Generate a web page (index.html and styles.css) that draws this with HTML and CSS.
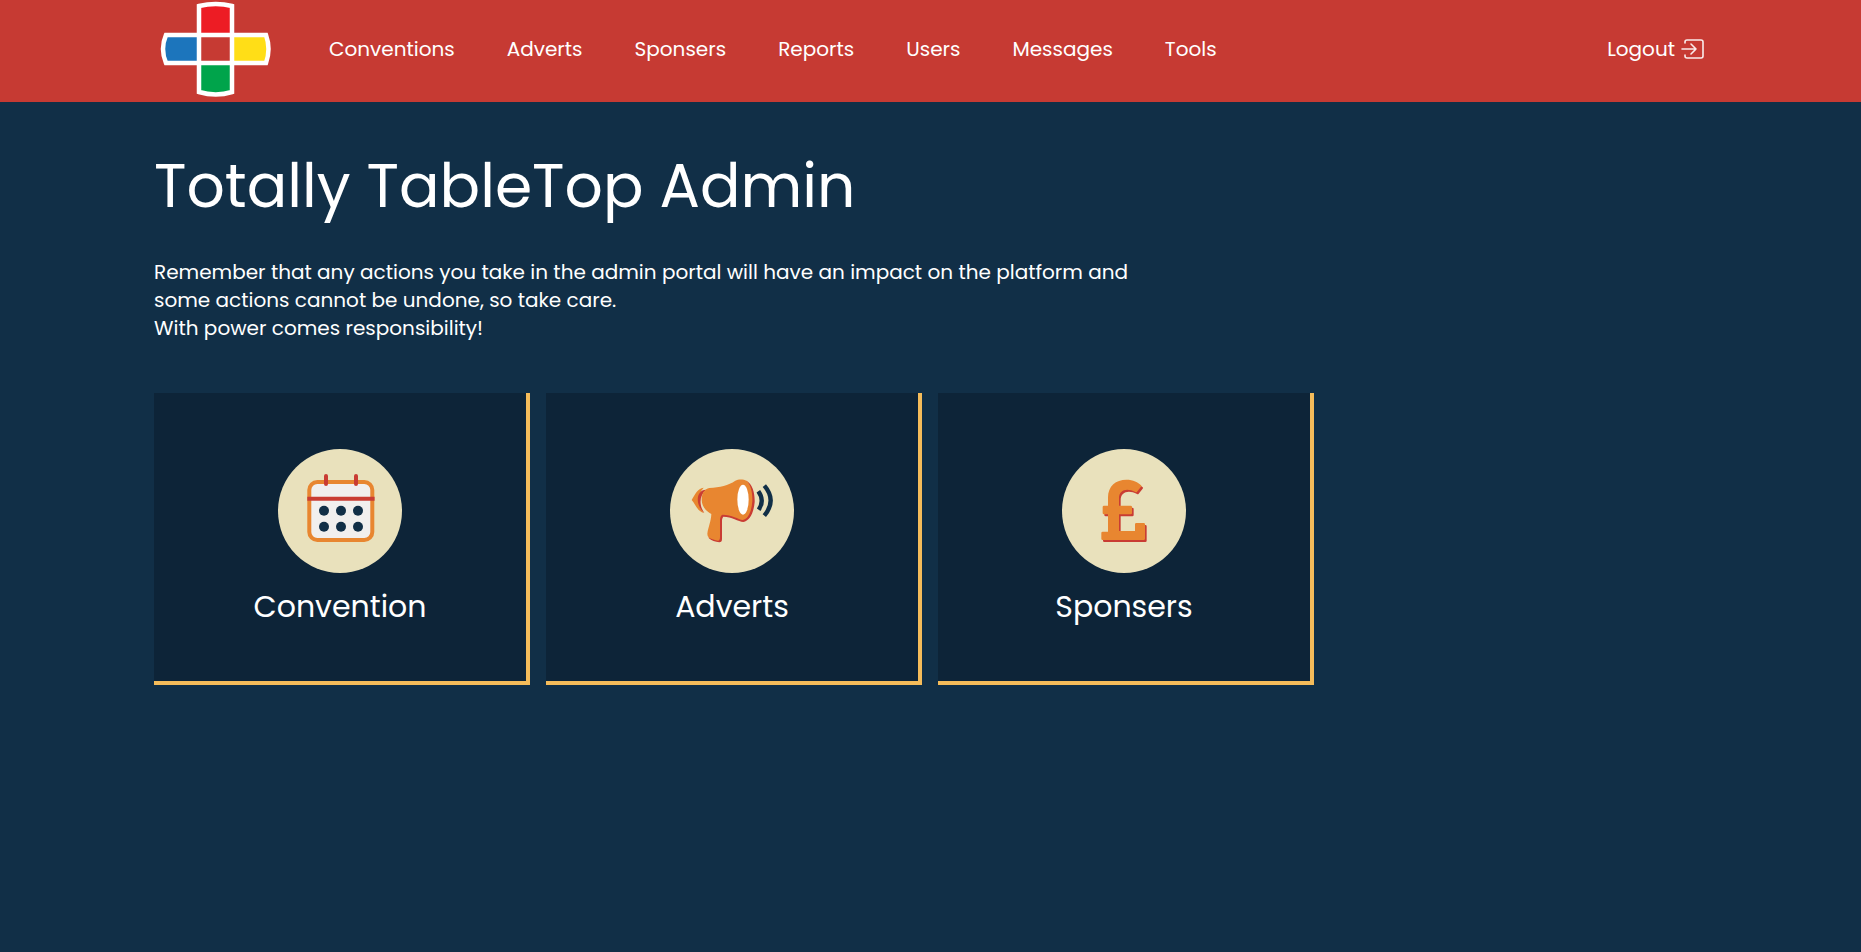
FILE: index.html
```html
<!DOCTYPE html>
<html lang="en">
<head>
<meta charset="utf-8">
<meta name="viewport" content="width=device-width, initial-scale=1">
<title>Totally TableTop Admin</title>
<link rel="stylesheet" href="styles.css">
</head>
<body>
<header class="site-header">
  <div class="container header-row">
    <a class="logo" href="#" aria-label="Home">
      <svg width="112" height="98" viewBox="160 0 112 98" aria-hidden="true">
        <path fill="#ed1c24" d="M199 34V7Q216 3 232 7V34Z"/>
        <path fill="#00a44b" d="M199 63V91Q216 96 232 91V63Z"/>
        <path fill="#1c75bc" d="M199 35H166Q161 49 166 63H199Z"/>
        <path fill="#ffde17" d="M232 35H266Q270 49 266 63H232Z"/>
        <g fill="none" stroke="#fff" stroke-width="4.500">
          <path d="M199 6Q216 2 232 6V92Q216 97 199 92Z"/>
          <path d="M166 35H266Q271 49 266 63H166Q160 49 166 35Z"/>
        </g>
      </svg>
    </a>
    <nav class="main-nav" aria-label="Main">
      <a href="#">Conventions</a>
      <a href="#">Adverts</a>
      <a href="#">Sponsers</a>
      <a href="#">Reports</a>
      <a href="#">Users</a>
      <a href="#">Messages</a>
      <a href="#">Tools</a>
    </nav>
    <a class="logout" href="#">Logout
      <svg width="24" height="20" viewBox="0 0 24 20" fill="none" stroke="#fff" stroke-opacity=".9" stroke-width="1.600" stroke-linecap="round" stroke-linejoin="round" aria-hidden="true">
        <path d="M4 4V3Q4 1 6 1H20Q22 1 22 3V17Q22 19 20 19H6Q4 19 4 17V16M1 10H15M10 5L15 10L10 15"/>
      </svg>
    </a>
  </div>
</header>
<main class="container content">
  <h1>Totally TableTop Admin</h1>
  <p class="intro">Remember that any actions you take in the admin portal will have an impact on the platform and some actions cannot be undone, so take care.<br>With power comes responsibility!</p>
  <div class="cards">
    <a class="card" href="#">
      <svg class="card-icon" viewBox="0 0 124 124" aria-hidden="true">
        <circle cx="62" cy="62" r="62" fill="#e9e1bc"/>
        <rect x="31.300" y="33" width="63" height="58" rx="8" fill="#f1efee" stroke="#e88630" stroke-width="4"/>
        <path d="M29.300 49.700H96.600" stroke="#c93c33" stroke-width="4"/>
        <path d="M48 27V35M78 27V35" stroke="#c93c33" stroke-width="4" stroke-linecap="round"/>
        <g fill="#112f47">
          <circle cx="46" cy="61.700" r="5"/><circle cx="63" cy="61.700" r="5"/><circle cx="80" cy="61.700" r="5"/>
          <circle cx="46" cy="77.700" r="5"/><circle cx="63" cy="77.700" r="5"/><circle cx="80" cy="77.700" r="5"/>
        </g>
      </svg>
      <h2>Convention</h2>
    </a>
    <a class="card" href="#">
      <svg class="card-icon" viewBox="30 27 372 372" aria-hidden="true">
        <circle cx="216" cy="213" r="186" fill="#e9e1bc"/>
        <path fill="#e88630" d="M95 180C106 162 112 146 131 143C115 160 108 195 132 219C112 214 108 195 95 180Z"/>
        <path fill="#c93c33" d="M138 149C108 149 104 196 133 219C117 196 117 168 138 149Z"/>
        <path fill="#c93c33" d="M259 122C278 132 285 160 284 187C281 220 268 243 250 246C235 245 215 230 190 230C186 234 186 240 186 248V297Q186 307 178 307C166 305 154 302 146 294L150 280L180 225Z"/>
        <path fill="#e88630" d="M125 178C125 160 134 147 148 144C180 142 205 136 226 122C236 116 252 118 259 122C273 132 278 160 277 183C275 213 265 238 248 240C235 238 215 224 188 224C181 226 180 235 180 245V290Q180 301 174 302C165 300 155 297 147 293Q142 290 142 281C145 260 153 245 154 222C137 212 125 200 125 178Z"/>
        <ellipse cx="249" cy="179" rx="17" ry="45" fill="#fff"/>
        <path fill="none" stroke="#112f47" stroke-width="13" d="M295 154Q315 182 296 209M313 137Q351 181 313 227"/>
      </svg>
      <h2>Adverts</h2>
    </a>
    <a class="card" href="#">
      <svg class="card-icon" viewBox="36 27 372 372" aria-hidden="true">
        <defs>
          <path id="pound" d="M174 197V172C174 138 198 119 229 119C250 119 264 127 273 136Q275 138 273 140L261 155Q259 158 256 156C230 143 207 150 207 175V197H242Q246 197 246 201V219Q246 223 242 223H207V273H255V253Q255 249 259 249H281Q285 249 285 253V296Q285 300 281 300H158Q154 300 154 296V279Q154 275 158 275H174V223H162Q158 223 158 219V201Q158 197 162 197Z"/>
        </defs>
        <circle cx="222" cy="213" r="186" fill="#e9e1bc"/>
        <use href="#pound" x="5" y="6" fill="#c93c33"/>
        <use href="#pound" fill="#e88630"/>
      </svg>
      <h2>Sponsers</h2>
    </a>
  </div>
</main>
</body>
</html>
```
FILE: styles.css
```css
* { box-sizing: border-box; }

body {
  margin: 0;
  min-height: 100vh;
  background: #112f47;
  color: #fff;
  font-family: Poppins, Inter, "Open Sans", sans-serif;
  font-size: 20px;
  line-height: 28px;
}

a { color: inherit; text-decoration: none; }

.container {
  width: 100%;
  max-width: 1601px;
  margin: 0 auto;
  padding: 0 24px;
}

.site-header { background: #c63a33; }

.header-row {
  display: flex;
  align-items: center;
  padding-bottom: 4px;
}

.logo { padding-left: 6px; }
.logo svg { display: block; }

.main-nav {
  display: flex;
  flex-wrap: wrap;
  gap: 52px;
  margin-left: 57px;
}

.logout {
  display: flex;
  align-items: center;
  gap: 6px;
  margin-left: auto;
  padding-right: 2px;
}

.content { padding-top: 48px; padding-bottom: 48px; }

h1 {
  margin: 0 0 36px;
  font-size: 60px;
  font-weight: 400;
  line-height: 72px;
}

.intro { margin: 0 0 51px; max-width: 1000px; }

.cards {
  display: grid;
  grid-template-columns: repeat(4, 1fr);
  gap: 16px;
  max-width: 1552px;
}

.card {
  display: flex;
  flex-direction: column;
  align-items: center;
  gap: 12px;
  padding: 56px 16px 52px;
  background: #0d2438;
  border-right: 4px solid #f5bc5a;
  border-bottom: 4px solid #f5bc5a;
}

.card-icon { width: 124px; height: 124px; }

h2 {
  margin: 0;
  font-size: 30px;
  font-weight: 400;
  line-height: 44px;
}
```
